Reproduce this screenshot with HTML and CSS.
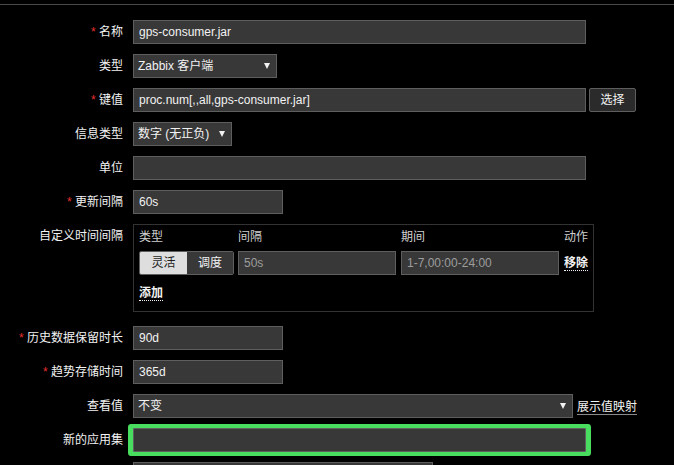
FILE: index.html
```html
<!DOCTYPE html>
<html lang="zh">
<head>
<meta charset="utf-8">
<title>监控项</title>
<link rel="stylesheet" href="styles.css">
</head>
<body>
<div class="topbar"></div>
<div class="form">
  <div class="lbl"><span class="req">*</span> 名称</div>
  <div class="field"><div class="input w-wide">gps-consumer.jar</div></div>

  <div class="lbl">类型</div>
  <div class="field"><div class="select w-type">Zabbix 客户端<span class="arrow"></span></div></div>

  <div class="lbl"><span class="req">*</span> 键值</div>
  <div class="field"><div class="input w-wide">proc.num[,,all,gps-consumer.jar]</div><div class="btn">选择</div></div>

  <div class="lbl">信息类型</div>
  <div class="field"><div class="select w-info">数字 (无正负)<span class="arrow"></span></div></div>

  <div class="lbl">单位</div>
  <div class="field"><div class="input w-wide"></div></div>

  <div class="lbl"><span class="req">*</span> 更新间隔</div>
  <div class="field"><div class="input w-small">60s</div></div>

  <div class="lbl lbl-top">自定义时间间隔</div>
  <div class="field">
    <div class="intervals">
      <div class="iv-grid">
        <div class="iv-head">类型</div>
        <div class="iv-head">间隔</div>
        <div class="iv-head">期间</div>
        <div class="iv-head">动作</div>
        <div class="radio">
          <span class="radio-opt active">灵活</span><span class="radio-opt">调度</span>
        </div>
        <div class="input ph iv-input">50s</div>
        <div class="input ph iv-input">1-7,00:00-24:00</div>
        <div class="iv-act"><span class="link-action">移除</span></div>
      </div>
      <div class="iv-add"><span class="link-action">添加</span></div>
    </div>
  </div>

  <div class="lbl"><span class="req">*</span> 历史数据保留时长</div>
  <div class="field"><div class="input w-small">90d</div></div>

  <div class="lbl"><span class="req">*</span> 趋势存储时间</div>
  <div class="field"><div class="input w-small">365d</div></div>

  <div class="lbl">查看值</div>
  <div class="field"><div class="select w-view">不变<span class="arrow"></span></div><span class="link">展示值映射</span></div>

  <div class="lbl">新的应用集</div>
  <div class="field"><div class="input w-wide focus"></div></div>

  <div class="lbl"></div>
  <div class="field"><div class="listbox"></div></div>
</div>
</body>
</html>
```
FILE: styles.css
```css
html, body {
  margin: 0;
  padding: 0;
  background: #000;
  color: #f2f2f2;
  font-family: "Liberation Sans", Arial, "Noto Sans CJK SC", sans-serif;
  font-size: 12px;
  overflow: hidden;
}

.topbar {
  height: 4px;
  border-bottom: 1px solid #4a4a4a;
}

.form {
  display: grid;
  grid-template-columns: 123px 1fr;
  column-gap: 10px;
  row-gap: 10px;
  padding-top: 15px;
}

.lbl {
  text-align: right;
  line-height: 24px;
  height: 24px;
  white-space: nowrap;
}

.lbl-top {
  line-height: 14px;
  padding-top: 5px;
}

.req {
  color: #e5322f;
}

.field {
  display: flex;
  align-items: center;
  min-height: 24px;
}

.input, .select {
  box-sizing: border-box;
  height: 24px;
  line-height: 22px;
  background: #383838;
  border: 1px solid #5e5e5e;
  padding: 0 5px;
  color: #f2f2f2;
  white-space: nowrap;
  overflow: hidden;
}

.select {
  position: relative;
  padding-left: 4px;
}

.arrow {
  position: absolute;
  right: 6px;
  top: 8px;
  width: 0;
  height: 0;
  border-left: 3px solid transparent;
  border-right: 3px solid transparent;
  border-top: 6px solid #f2f2f2;
}

.w-wide { width: 453px; }
.w-type { width: 144px; }
.w-info { width: 99px; }
.w-small { width: 150px; }
.w-view { width: 440px; }

.btn {
  box-sizing: border-box;
  margin-left: 3px;
  height: 24px;
  width: 47px;
  line-height: 22px;
  text-align: center;
  background: #2b2b2b;
  border: 1px solid #5e5e5e;
  border-radius: 2px;
  color: #f2f2f2;
}

.link {
  margin-left: 4px;
  margin-top: 2px;
  line-height: 14px;
  border-bottom: 1px solid #8a8a8a;
  color: #f2f2f2;
}

.intervals {
  box-sizing: border-box;
  width: 461px;
  border: 1px solid #333;
  padding: 5px 5px 10px 5px;
  margin-bottom: 4px;
}

.iv-grid {
  display: grid;
  grid-template-columns: 99px 163px 163px 1fr;
  grid-template-rows: 14px 24px;
  row-gap: 7px;
}

.iv-head {
  line-height: 14px;
  color: #cfcfcf;
  white-space: nowrap;
}

.radio {
  display: flex;
  box-sizing: border-box;
  width: 95px;
  height: 24px;
  border: 1px solid #5e5e5e;
  border-radius: 2px;
  overflow: hidden;
}

.radio-opt {
  flex: 1;
  text-align: center;
  line-height: 22px;
  background: #383838;
  color: #f2f2f2;
}

.radio-opt.active {
  flex: 0 0 47px;
  background: #dedede;
  color: #1f1f1f;
}

.iv-input {
  width: 158px;
}

.ph {
  color: #9d9d9d;
}

.iv-act {
  display: flex;
  align-items: center;
  white-space: nowrap;
}

.link-action {
  display: inline-block;
  line-height: 14px;
  font-weight: bold;
  border-bottom: 1px dotted #f2f2f2;
  color: #f2f2f2;
}

.iv-add {
  margin-top: 11px;
  line-height: 15px;
}

.focus {
  border-radius: 1px;
  box-shadow: 0 0 0 4px #48dd5e, 1px 0 0 4px #48dd5e, -1px 0 0 4px #48dd5e;
}

.listbox {
  box-sizing: border-box;
  width: 300px;
  height: 60px;
  background: #383838;
  border: 1px solid #5e5e5e;
}
```
